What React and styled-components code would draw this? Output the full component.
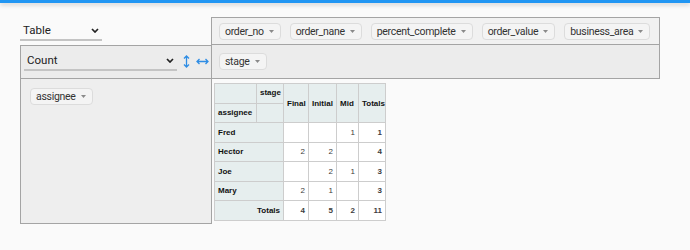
import React from 'react';
import styled, { createGlobalStyle } from 'styled-components';

const GlobalStyle = createGlobalStyle`
  body {
    margin: 0;
    background: #fafafa;
    font-family: Roboto, "Liberation Sans", sans-serif;
    color: #222;
  }
`;

const TopBar = styled.div`
  height: 3px;
  background: #2196f3;
  box-shadow: 0 2px 4px rgba(0, 0, 0, 0.18);
`;

const Page = styled.div`
  padding: 14px 0 0 20px;
`;

const PivotGrid = styled.div`
  display: grid;
  grid-template-columns: 191px 449px;
  grid-template-rows: 28px 34px 145px;
`;

const RendererCell = styled.div`
  padding-top: 4px;
`;

const AttrRow = styled.div`
  box-sizing: border-box;
  display: flex;
  align-items: center;
  gap: 9px;
  padding-left: 7px;
  background: ${props => props.$bg};
  border: 1px solid #a4a4a4;
  border-top-width: ${props => (props.$noTop ? 0 : 1)}px;
`;

const ValsCell = styled.div`
  box-sizing: border-box;
  display: flex;
  align-items: flex-start;
  padding: 5px 0 0 3px;
  background: #ececec;
  border: 1px solid #a4a4a4;
  border-right: none;
`;

const RowsCell = styled.div`
  box-sizing: border-box;
  display: flex;
  align-items: flex-start;
  padding: 9px 0 0 9px;
  background: #eeeeee;
  border-left: 1px solid #a4a4a4;
  border-bottom: 1px solid #a4a4a4;
`;

const OutputCell = styled.div`
  padding: 4px 0 0 2px;
  border-left: 1px solid #a4a4a4;
`;

const SelectBox = styled.div`
  box-sizing: border-box;
  width: ${props => props.$width}px;
  height: 20px;
  display: flex;
  align-items: center;
  justify-content: space-between;
  padding: 0 3px 0 ${props => props.$pad}px;
  border-bottom: 2px solid #c4c4c4;
  font-size: 11.5px;
  color: #222;
`;

const AxisArrows = styled.div`
  display: flex;
  align-items: center;
  gap: 6px;
  height: 20px;
  margin-left: 6px;
`;

const Pill = styled.div`
  box-sizing: border-box;
  height: 17px;
  display: flex;
  align-items: center;
  gap: 5px;
  padding: 0 6px 0 5px;
  background: #f4f4f4;
  border: 1px solid #dcdcdc;
  border-radius: 4px;
  font-size: 10.5px;
  letter-spacing: -0.3px;
  color: #333;
  white-space: nowrap;
`;

const PvtTable = styled.table`
  width: 171px;
  border-collapse: collapse;
  table-layout: fixed;
  font-family: "Liberation Sans", Arial, sans-serif;
  font-size: 8px;
`;

const Col = styled.col`
  width: ${props => props.$w}px;
`;

const Tr = styled.tr`
  height: 19.5px;
`;

const Th = styled.th`
  background: #e6eeee;
  border: 1px solid #cdcdcd;
  padding: 0 3px;
  font-weight: 700;
  color: #111;
  text-align: ${props => props.$align || 'left'};
  vertical-align: ${props => props.$valign || 'middle'};
  padding-top: ${props => (props.$valign === 'top' ? 4 : 0)}px;
`;

const Td = styled.td`
  background: #fff;
  border: 1px solid #cdcdcd;
  padding: 0 3px;
  text-align: right;
  color: #3d3d3d;
  font-weight: ${props => (props.$total ? 700 : 400)};
`;

const Chevron = () => (
  <svg width="8" height="5" viewBox="0 0 8 5">
    <polyline points="1,1 4,4 7,1" fill="none" stroke="#222" strokeWidth="1.7" />
  </svg>
);

const Caret = () => (
  <svg width="5" height="3" viewBox="0 0 5 3">
    <polygon points="0,0 5,0 2.5,3" fill="#8a8a8a" />
  </svg>
);

const VertArrow = () => (
  <svg width="7" height="13" viewBox="0 0 7 13">
    <path d="M3.5 1 V12 M1 3.5 L3.5 1 L6 3.5 M1 9.5 L3.5 12 L6 9.5" fill="none" stroke="#2f8de4" strokeWidth="1.3" />
  </svg>
);

const HorzArrow = () => (
  <svg width="13" height="7" viewBox="0 0 13 7">
    <path d="M1 3.5 H12 M3.5 1 L1 3.5 L3.5 6 M9.5 1 L12 3.5 L9.5 6" fill="none" stroke="#2f8de4" strokeWidth="1.3" />
  </svg>
);

const Attr = ({ name }) => (
  <Pill>
    {name}
    <Caret />
  </Pill>
);

const unused = ['order_no', 'order_nane', 'percent_complete', 'order_value', 'business_area'];
const stages = ['Final', 'Initial', 'Mid'];
const rows = [
  { name: 'Fred', vals: ['', '', '1'], total: 1 },
  { name: 'Hector', vals: ['2', '2', ''], total: 4 },
  { name: 'Joe', vals: ['', '2', '1'], total: 3 },
  { name: 'Mary', vals: ['2', '1', ''], total: 3 },
];
const colTotals = [4, 5, 2];

const App = () => (
  <>
    <GlobalStyle />
    <TopBar />
    <Page>
      <PivotGrid>
        <RendererCell>
          <SelectBox $width={82} $pad={3}>
            Table
            <Chevron />
          </SelectBox>
        </RendererCell>
        <AttrRow $bg="#f1f1f1">
          {unused.map(n => <Attr key={n} name={n} />)}
        </AttrRow>

        <ValsCell>
          <SelectBox $width={153} $pad={3}>
            Count
            <Chevron />
          </SelectBox>
          <AxisArrows>
            <VertArrow />
            <HorzArrow />
          </AxisArrows>
        </ValsCell>
        <AttrRow $bg="#ececec" $noTop>
          <Attr name="stage" />
        </AttrRow>

        <RowsCell>
          <Attr name="assignee" />
        </RowsCell>
        <OutputCell>
          <PvtTable>
            <colgroup>
              <Col $w={42} />
              <Col $w={27} />
              <Col $w={25} />
              <Col $w={28} />
              <Col $w={22} />
              <Col $w={27} />
            </colgroup>
            <thead>
              <Tr>
                <Th />
                <Th $align="right" $valign="top">stage</Th>
                {stages.map(s => (
                  <Th key={s} rowSpan={2}>{s}</Th>
                ))}
                <Th rowSpan={2}>Totals</Th>
              </Tr>
              <Tr>
                <Th>assignee</Th>
                <Th />
              </Tr>
            </thead>
            <tbody>
              {rows.map(r => (
                <Tr key={r.name}>
                  <Th colSpan={2}>{r.name}</Th>
                  {r.vals.map((v, i) => (
                    <Td key={i}>{v}</Td>
                  ))}
                  <Td $total>{r.total}</Td>
                </Tr>
              ))}
              <Tr>
                <Th colSpan={2} $align="right">Totals</Th>
                {colTotals.map((t, i) => (
                  <Td key={i} $total>{t}</Td>
                ))}
                <Td $total>11</Td>
              </Tr>
            </tbody>
          </PvtTable>
        </OutputCell>
      </PivotGrid>
    </Page>
  </>
);

export default App;
